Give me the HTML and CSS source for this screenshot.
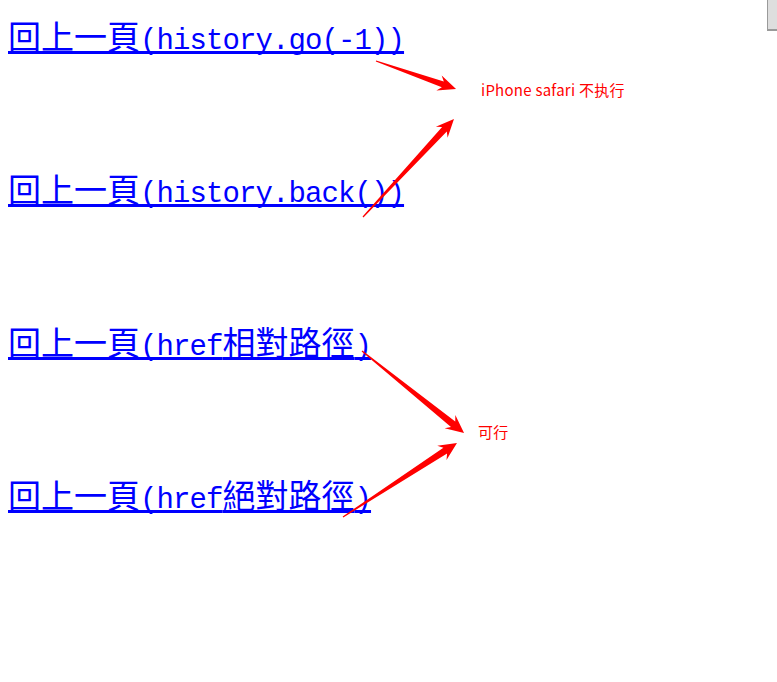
FILE: index.html
```html
<!DOCTYPE html>
<html lang="zh-Hant">
<head>
<meta charset="utf-8">
<title>回上一頁</title>
<link rel="stylesheet" href="styles.css">
</head>
<body>
<div class="page">
  <nav class="links">
    <a class="back" href="#"><span class="cjk">回上一頁</span><span class="latin">(history.go(-1))</span></a>
    <a class="back" href="#"><span class="cjk">回上一頁</span><span class="latin">(history.back())</span></a>
    <a class="back" href="#"><span class="cjk">回上一頁</span><span class="latin">(href</span><span class="cjk">相對路徑</span><span class="latin">)</span></a>
    <a class="back" href="#"><span class="cjk">回上一頁</span><span class="latin">(href</span><span class="cjk">絕對路徑</span><span class="latin">)</span></a>
  </nav>

  <svg class="arrows" width="777" height="682" viewBox="0 0 777 682" aria-hidden="true">
    <g fill="#ff0000">
      <g transform="translate(376 61) rotate(19.29)">
        <polygon points="0,-0.6 70.8,-3 66.8,-8 84.8,0 66.8,8 70.8,3 0,0.6"/>
      </g>
      <g transform="translate(363 217) rotate(-47.12)">
        <polygon points="0,-0.6 119.7,-3.2 115.7,-8 133.7,0 115.7,8 119.7,3.2 0,0.6"/>
      </g>
      <g transform="translate(362 351) rotate(38.79)">
        <polygon points="0,-0.6 116.9,-3.4 112.9,-8.5 130.9,0 112.9,8.5 116.9,3.4 0,0.6"/>
      </g>
      <g transform="translate(343 517) rotate(-33)">
        <polygon points="0,-0.6 121.9,-3.4 117.9,-8.5 135.9,0 117.9,8.5 121.9,3.4 0,0.6"/>
      </g>
    </g>
  </svg>

  <p class="note note-fail">iPhone safari 不执行</p>
  <p class="note note-ok">可行</p>

  <div class="scroll-thumb"></div>
</div>
</body>
</html>
```

FILE: styles.css
```css
html, body {
  margin: 0;
  padding: 0;
  background: #ffffff;
}

.page {
  position: relative;
  width: 777px;
  height: 682px;
  overflow: hidden;
}

.links {
  display: flex;
  flex-direction: column;
  align-items: flex-start;
  gap: 113px;
  padding: 15px 0 0 8px;
}

.back {
  display: block;
  height: 40px;
  line-height: 40px;
  color: #0000ff;
  white-space: nowrap;
  text-decoration: underline;
  text-decoration-thickness: 3px;
  text-underline-offset: 2px;
  text-decoration-skip-ink: none;
}

.cjk {
  font-family: "Noto Sans CJK TC", "Noto Sans CJK SC", sans-serif;
  font-size: 33px;
}

.latin {
  font-family: "Liberation Mono", "DejaVu Sans Mono", monospace;
  font-size: 29px;
  letter-spacing: -0.9px;
}

.arrows {
  position: absolute;
  left: 0;
  top: 0;
  pointer-events: none;
}

.note {
  position: absolute;
  margin: 0;
  color: #ff0000;
  font-family: "Noto Sans CJK SC", "Noto Sans CJK TC", sans-serif;
  font-size: 15px;
  line-height: 20px;
  letter-spacing: 0.25px;
  white-space: nowrap;
}

.note-fail {
  left: 481px;
  top: 80px;
}

.note-ok {
  left: 478px;
  top: 422px;
}

.scroll-thumb {
  position: absolute;
  right: 0;
  top: 0;
  width: 9px;
  height: 29px;
  background: #dedede;
  border-left: 1px solid #9a9a9a;
  border-bottom: 2px solid #9a9a9a;
}
```
